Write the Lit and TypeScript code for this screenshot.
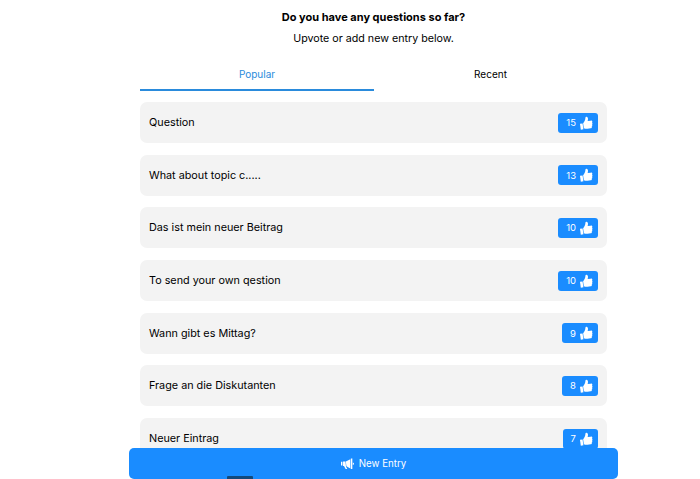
import { LitElement, html, css, svg } from "lit";
import { customElement } from "lit/decorators.js";

const items: [string, number][] = [
  ["Question", 15],
  ["What about topic c.....", 13],
  ["Das ist mein neuer Beitrag", 10],
  ["To send your own qestion", 10],
  ["Wann gibt es Mittag?", 9],
  ["Frage an die Diskutanten", 8],
  ["Neuer Eintrag", 7],
];

const thumb = svg`<g transform="rotate(-8 7.5 7.500)"><path d="M1 7.400h2.800v6.400H1z"/><path d="M4.400 7.400c1.400-1.200 2.500-2.800 3-4.400.2-.9.3-2 1.300-2 1.200 0 1.700 1.200 1.500 2.500-.1.8-.4 1.500-.7 2.200h3.400c.9 0 1.500.6 1.500 1.300 0 .5-.2.9-.6 1.100.4.3.5.6.5 1 0 .5-.3.9-.7 1.100.2.3.2.5.2.8 0 .5-.3.9-.8 1.100.1.2.1.4.1.5 0 .8-.6 1.200-1.500 1.200H8.300c-1.500 0-2.600-.5-3.900-1.100z"/></g>`;

@customElement("app-root")
export class AppRoot extends LitElement {
  static styles = css`
    :host {
      display: block;
      position: relative;
      height: 479px;
      overflow: hidden;
      background: #fff;
      color: #000;
      font-family: Inter, "Liberation Sans", sans-serif;
    }
    .page {
      width: 467px;
      margin-left: 140px;
      padding-top: 10px;
    }
    .head {
      text-align: center;
    }
    .title {
      font-size: 11px;
      font-weight: 700;
      line-height: 14px;
    }
    .sub {
      margin-top: 8px;
      font-size: 10.7px;
      line-height: 14px;
    }
    .tabs {
      display: grid;
      grid-template-columns: 234px 1fr;
      margin-top: 13px;
    }
    .tab {
      height: 32px;
      box-sizing: border-box;
      padding-top: 8px;
      text-align: center;
      font-size: 10px;
      line-height: 14px;
    }
    .tab.active {
      color: #2a8bdc;
      border-bottom: 2px solid #2a8bdc;
    }
    .list {
      display: flex;
      flex-direction: column;
      gap: 11.7px;
      margin-top: 11px;
    }
    .row {
      display: flex;
      align-items: center;
      justify-content: space-between;
      height: 41px;
      padding: 0 9px;
      background: #f3f3f3;
      border-radius: 7px;
      font-size: 10.8px;
    }
    .badge {
      display: flex;
      align-items: center;
      gap: 3px;
      height: 20px;
      padding: 0 5px 0 8px;
      background: #1a8cff;
      border-radius: 3px;
      color: #fff;
      font-size: 9.5px;
    }
    .badge svg {
      width: 14px;
      height: 14px;
      fill: #fff;
    }
    .new {
      position: absolute;
      left: 129px;
      top: 448px;
      width: 489px;
      height: 31px;
      display: flex;
      align-items: center;
      justify-content: center;
      gap: 5px;
      background: #1a8cff;
      border-radius: 5px;
      color: #fff;
      font-size: 9.7px;
    }
    .new svg {
      width: 13px;
      height: 12px;
      fill: #fff;
    }
    .peek {
      position: absolute;
      left: 227px;
      top: 476px;
      width: 26px;
      height: 3px;
      background: #12497c;
      border-radius: 1px 1px 0 0;
    }
  `;

  render() {
    return html`
      <div class="page">
        <div class="head">
          <div class="title">Do you have any questions so far?</div>
          <div class="sub">Upvote or add new entry below.</div>
        </div>
        <div class="tabs">
          <div class="tab active">Popular</div>
          <div class="tab">Recent</div>
        </div>
        <div class="list">
          ${items.map(
            ([text, n]) => html`
              <div class="row">
                <span>${text}</span>
                <span class="badge">${n}<svg viewBox="0 0 15 15">${thumb}</svg></span>
              </div>
            `
          )}
        </div>
      </div>
      <div class="new">
        <svg viewBox="0 0 14 12">
          <path d="M0 3.500h1.500v4H0zM2.200 3.200h2.600l.6 5.800 1.400 2.500H5L3.200 8.200H2.200z"/>
          <path d="M5.200 3.200 10 .8v10L5.800 8.300z"/>
          <path d="M10.600 0h1.600v11.500h-1.600zM12.800 4.300c.8.300 1.200.8 1.200 1.400s-.4 1.100-1.200 1.400z"/>
        </svg>
        New Entry
      </div>
      <div class="peek"></div>
    `;
  }
}
